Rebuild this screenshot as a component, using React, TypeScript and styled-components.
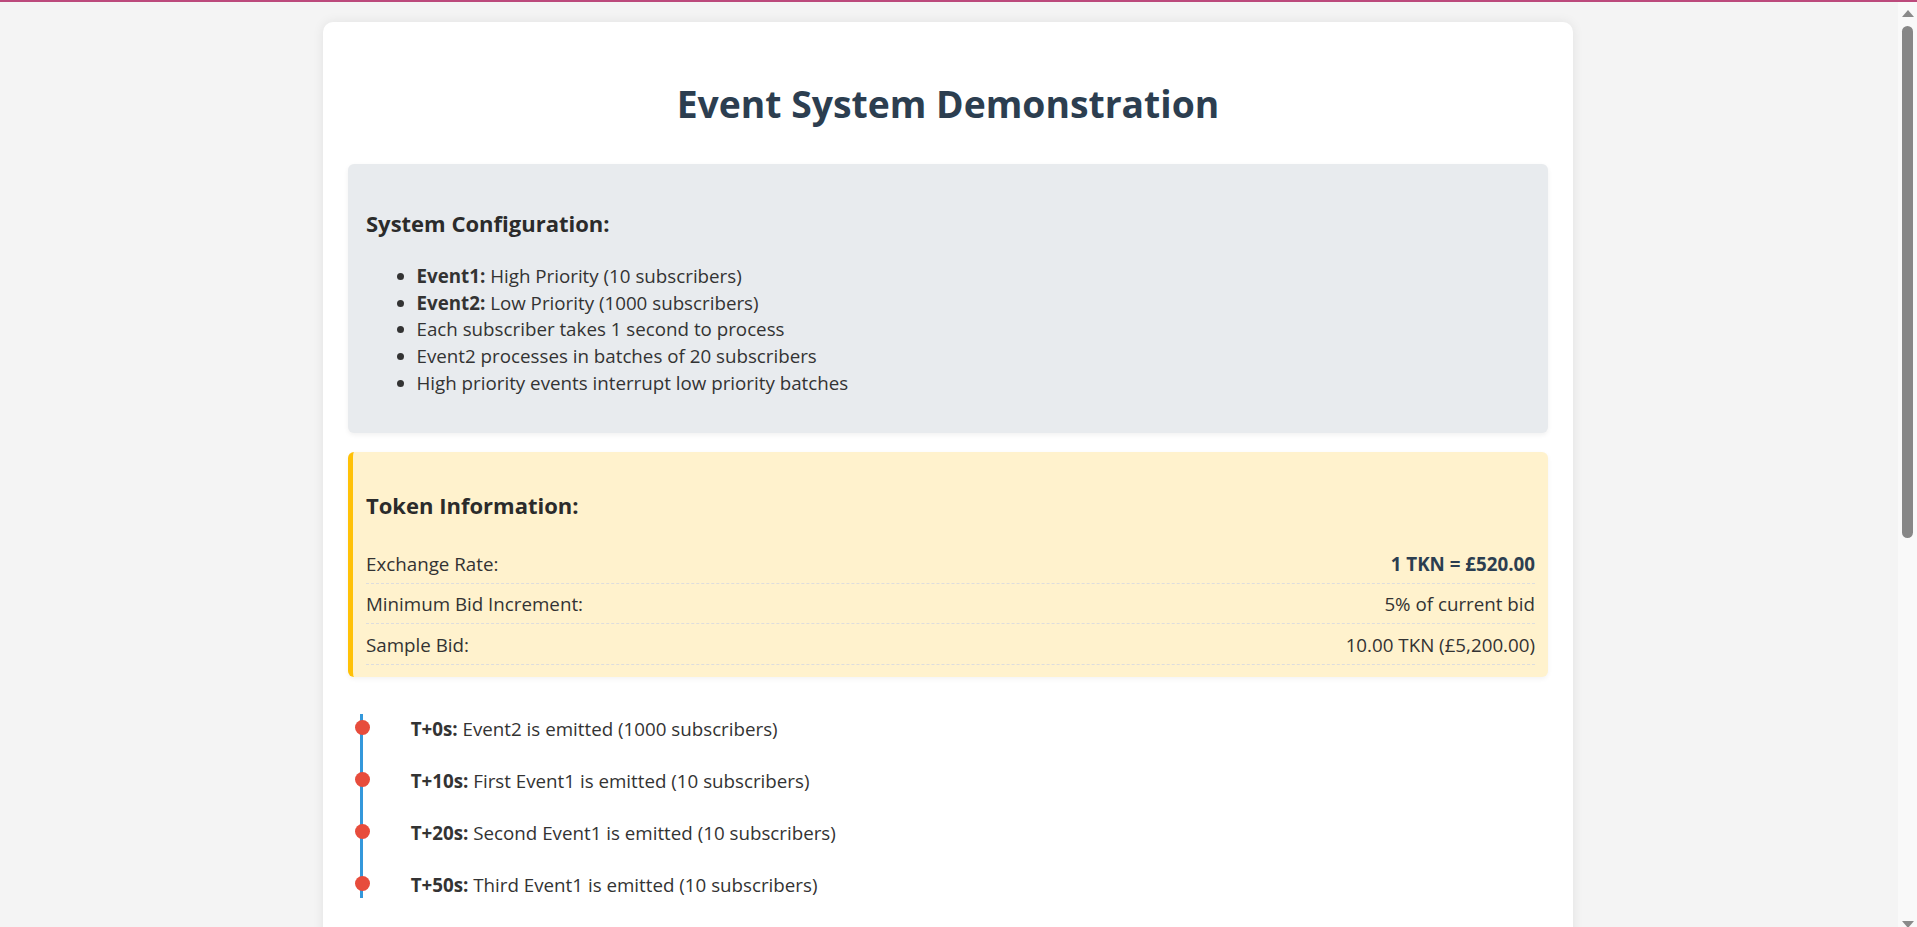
import React from "react";
import styled, { createGlobalStyle } from "styled-components";

const GlobalStyle = createGlobalStyle`
  html, body {
    margin: 0;
    padding: 0;
    overflow: hidden;
  }
  body {
    font-family: "Open Sans", "Noto Sans", sans-serif;
    font-size: 18.75px;
    color: #333333;
  }
  * { box-sizing: border-box; }
`;

const Shell = styled.div`
  height: 100vh;
  display: flex;
  flex-direction: column;
`;

const TopStripe = styled.div`
  height: 2px;
  flex: 0 0 2px;
  background: #bc4a7c;
`;

const Viewport = styled.div`
  flex: 1;
  min-height: 0;
  display: flex;
`;

const Page = styled.main`
  flex: 1;
  min-width: 0;
  overflow: hidden;
  background: #f4f4f4;
  padding: 20px 2px 0 0;
`;

const Card = styled.div`
  width: 1250px;
  margin: 0 auto;
  background: #ffffff;
  border-radius: 10px;
  box-shadow: 0 0 12px rgba(0, 0, 0, 0.08);
  padding: 25px;
  min-height: 1580px;
`;

const Title = styled.h1`
  margin: 34px 0 38px;
  text-align: center;
  font-size: 37.3px;
  line-height: 45px;
  font-weight: 700;
  color: #2c3e50;
`;

const ConfigBox = styled.section`
  background: #e8ebee;
  border-radius: 6px;
  padding: 19px 18px 18px;
  box-shadow: 0 2px 5px rgba(0, 0, 0, 0.06);
`;

const SectionHeading = styled.h3<{ $top: number; $bottom: number }>`
  margin: ${(p) => p.$top}px 0 ${(p) => p.$bottom}px;
  font-size: 22px;
  line-height: 30px;
  font-weight: 700;
  color: #2b2b2b;
`;

const ConfigList = styled.ul`
  margin: 0 0 18px;
  padding-left: 50.5px;
`;

const ConfigItem = styled.li`
  line-height: 26.9px;
`;

const TokenBox = styled.section`
  margin-top: 19px;
  background: #fff2cd;
  border-left: 5px solid #ffc107;
  border-radius: 6px;
  padding: 12.5px 13px 12px 13px;
  box-shadow: 0 2px 5px rgba(0, 0, 0, 0.05);
`;

const InfoRow = styled.div`
  display: flex;
  justify-content: space-between;
  align-items: baseline;
  padding: 6.5px 0 5.5px;
  line-height: 27.5px;
  border-bottom: 1px dashed #dddddd;
`;

const InfoLabel = styled.span`
  color: #333333;
`;

const InfoValue = styled.span<{ $strong?: boolean }>`
  color: ${(p) => (p.$strong ? "#2c3e50" : "#333333")};
  font-weight: ${(p) => (p.$strong ? 700 : 400)};
`;

const Timeline = styled.div`
  position: relative;
  margin-top: 37.5px;
  padding-left: 62.7px;

  &::before {
    content: "";
    position: absolute;
    left: 12px;
    top: 0;
    bottom: 0;
    width: 2.5px;
    background: #3498db;
  }
`;

const TimelineItem = styled.div`
  position: relative;
  line-height: 26.9px;
  padding-top: 1.5px;
  margin-bottom: 23.5px;

  &:last-child {
    margin-bottom: 0;
  }

  &::before {
    content: "";
    position: absolute;
    left: -56.2px;
    top: 6px;
    width: 15px;
    height: 15px;
    border-radius: 50%;
    background: #e74c3c;
  }
`;

const Rail = styled.aside`
  width: 19px;
  flex: 0 0 19px;
  background: #f9f9f9;
  display: flex;
  flex-direction: column;
  align-items: center;
`;

const RailArrow = styled.div<{ $down?: boolean }>`
  width: 0;
  height: 0;
  border-left: 6px solid transparent;
  border-right: 6px solid transparent;
  ${(p) =>
    p.$down
      ? "border-top: 7px solid #8a8a8a; margin-top: auto; margin-bottom: -1px;"
      : "border-bottom: 7.5px solid #8a8a8a; margin-top: 7.5px;"}
`;

const RailThumb = styled.div`
  width: 11.3px;
  height: 512px;
  margin-top: 9.7px;
  border-radius: 6px;
  background: #878787;
`;

const config = [
  { strong: "Event1:", text: " High Priority (10 subscribers)" },
  { strong: "Event2:", text: " Low Priority (1000 subscribers)" },
  { text: "Each subscriber takes 1 second to process" },
  { text: "Event2 processes in batches of 20 subscribers" },
  { text: "High priority events interrupt low priority batches" },
];

const tokenRows = [
  { label: "Exchange Rate:", value: "1 TKN = £520.00", strong: true },
  { label: "Minimum Bid Increment:", value: "5% of current bid" },
  { label: "Sample Bid:", value: "10.00 TKN (£5,200.00)" },
];

const events = [
  { time: "T+0s:", text: " Event2 is emitted (1000 subscribers)" },
  { time: "T+10s:", text: " First Event1 is emitted (10 subscribers)" },
  { time: "T+20s:", text: " Second Event1 is emitted (10 subscribers)" },
  { time: "T+50s:", text: " Third Event1 is emitted (10 subscribers)" },
];

export default function App() {
  return (
    <Shell>
      <GlobalStyle />
      <TopStripe />
      <Viewport>
        <Page>
          <Card>
            <Title>Event System Demonstration</Title>

            <ConfigBox>
              <SectionHeading $top={25} $bottom={24.6}>
                System Configuration:
              </SectionHeading>
              <ConfigList>
                {config.map((c, i) => (
                  <ConfigItem key={i}>
                    {c.strong && <strong>{c.strong}</strong>}
                    {c.text}
                  </ConfigItem>
                ))}
              </ConfigList>
            </ConfigBox>

            <TokenBox>
              <SectionHeading $top={25} $bottom={23.7}>
                Token Information:
              </SectionHeading>
              {tokenRows.map((r) => (
                <InfoRow key={r.label}>
                  <InfoLabel>{r.label}</InfoLabel>
                  <InfoValue $strong={r.strong}>{r.value}</InfoValue>
                </InfoRow>
              ))}
            </TokenBox>

            <Timeline>
              {events.map((e) => (
                <TimelineItem key={e.time}>
                  <strong>{e.time}</strong>
                  {e.text}
                </TimelineItem>
              ))}
            </Timeline>
          </Card>
        </Page>
        <Rail>
          <RailArrow />
          <RailThumb />
          <RailArrow $down />
        </Rail>
      </Viewport>
    </Shell>
  );
}
